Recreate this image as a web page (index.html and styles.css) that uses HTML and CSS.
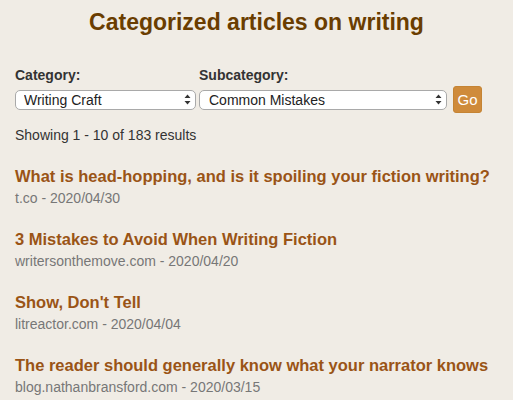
FILE: index.html
```html
<!DOCTYPE html>
<html lang="en">
<head>
<meta charset="utf-8">
<title>Categorized articles on writing</title>
<link rel="stylesheet" href="styles.css">
</head>
<body>
<main class="page">
  <h1 class="page-title">Categorized articles on writing</h1>
  <form class="filters">
    <div class="field field-cat">
      <label class="field-label" for="cat">Category:</label>
      <span class="select-wrap">
        <select id="cat" class="select"><option>Writing Craft</option></select>
        <svg class="select-arrows" width="7" height="11" viewBox="0 0 7 11"><path d="M3.5 0.5 L6.5 4 L0.5 4 Z M3.5 10.5 L6.5 7 L0.5 7 Z" fill="#333"/></svg>
      </span>
    </div>
    <div class="field field-sub">
      <label class="field-label" for="sub">Subcategory:</label>
      <div class="field-row">
        <span class="select-wrap">
          <select id="sub" class="select"><option>Common Mistakes</option></select>
          <svg class="select-arrows" width="7" height="11" viewBox="0 0 7 11"><path d="M3.5 0.5 L6.5 4 L0.5 4 Z M3.5 10.5 L6.5 7 L0.5 7 Z" fill="#333"/></svg>
        </span>
        <button type="button" class="go">Go</button>
      </div>
    </div>
  </form>
  <p class="count">Showing 1 - 10 of 183 results</p>
  <ul class="articles">
    <li class="article">
      <a class="article-title" href="#">What is head-hopping, and is it spoiling your fiction writing?</a>
      <div class="article-meta">t.co - 2020/04/30</div>
    </li>
    <li class="article">
      <a class="article-title" href="#">3 Mistakes to Avoid When Writing Fiction</a>
      <div class="article-meta">writersonthemove.com - 2020/04/20</div>
    </li>
    <li class="article">
      <a class="article-title" href="#">Show, Don't Tell</a>
      <div class="article-meta">litreactor.com - 2020/04/04</div>
    </li>
    <li class="article">
      <a class="article-title" href="#">The reader should generally know what your narrator knows</a>
      <div class="article-meta">blog.nathanbransford.com - 2020/03/15</div>
    </li>
  </ul>
</main>
</body>
</html>
```

FILE: styles.css
```css
html, body {
  margin: 0;
  padding: 0;
  background: #f0ece5;
}
body {
  font-family: "Liberation Sans", Arial, Helvetica, sans-serif;
  color: #333;
  font-size: 14px;
}
.page {
  padding: 9px 15px 0 15px;
}
.page-title {
  margin: 0;
  font-size: 23px;
  line-height: 27px;
  font-weight: bold;
  color: #6a3d00;
  text-align: center;
}
.filters {
  display: flex;
  margin-top: 31px;
  gap: 3px;
}
.field {
  display: flex;
  flex-direction: column;
}
.field-cat {
  width: 181px;
}
.field-sub {
  flex: 1;
}
.field-label {
  font-weight: bold;
  font-size: 14px;
  line-height: 16px;
  color: #333;
  height: 16px;
  margin-bottom: 7px;
}
.field-row {
  display: flex;
  align-items: center;
  gap: 6px;
  margin-top: -4px;
}
.field-sub .select-wrap {
  width: 248px;
}
.select-wrap {
  position: relative;
  display: block;
  height: 20px;
}
.select {
  appearance: none;
  -webkit-appearance: none;
  display: block;
  width: 100%;
  height: 20px;
  box-sizing: border-box;
  margin: 0;
  padding: 0 20px 0 8px;
  border: 1px solid #a9a9a9;
  border-radius: 5px;
  background: #fff;
  font-family: "Liberation Sans", Arial, Helvetica, sans-serif;
  font-size: 14px;
  line-height: 18px;
  color: #222;
}
.field-sub .select {
  padding-left: 9px;
}
.select-arrows {
  position: absolute;
  right: 5px;
  top: 4px;
  pointer-events: none;
}
.go {
  width: 29px;
  height: 27px;
  padding: 0;
  border: 1px solid #c58434;
  border-radius: 3px;
  background: #cf8b3b;
  color: #fff;
  font-family: "Liberation Sans", Arial, Helvetica, sans-serif;
  font-size: 15px;
  line-height: 25px;
}
.count {
  margin: 14px 0 0 0;
  font-size: 14px;
  line-height: 16px;
  color: #333;
}
.articles {
  list-style: none;
  margin: 23px 0 0 0;
  padding: 0;
}
.article {
  margin-bottom: 23px;
}
.article-title {
  display: block;
  font-size: 16.5px;
  line-height: 20px;
  font-weight: bold;
  color: #9a5416;
  text-decoration: none;
}
.article-meta {
  margin-top: 4px;
  font-size: 14px;
  line-height: 16px;
  color: #777;
}
```
